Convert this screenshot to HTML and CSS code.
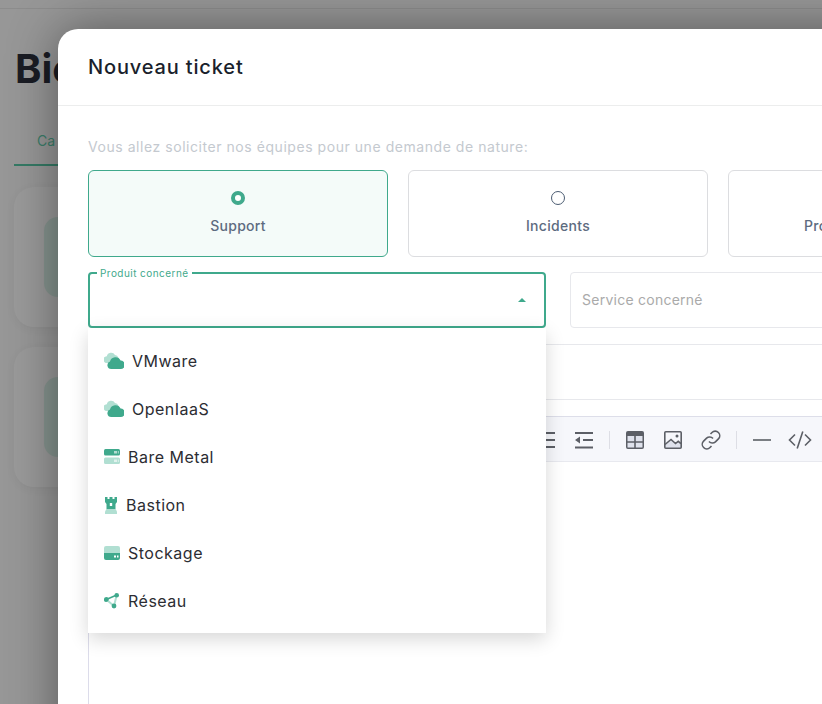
FILE: index.html
```html
<!DOCTYPE html>
<html lang="fr">
<head>
  <meta charset="UTF-8">
  <title>Nouveau ticket</title>
  <link rel="stylesheet" href="styles.css">
</head>
<body>
<div class="page">
  <div class="topbar"></div>
  <h1 class="page-title">Bie</h1>
  <div class="tabs"><span class="tab">Ca</span></div>
  <div class="card"><div class="card-thumb"></div></div>
  <div class="card"><div class="card-thumb"></div></div>
</div>

<div class="modal">
  <div class="modal-head">Nouveau ticket</div>
  <div class="modal-body">
    <div class="intro">Vous allez soliciter nos équipes pour une demande de nature:</div>

    <div class="kinds">
      <div class="kind selected"><span class="radio"></span><span>Support</span></div>
      <div class="kind"><span class="radio"></span><span>Incidents</span></div>
      <div class="kind kind-clipped"><span class="radio"></span><span>Pro</span></div>
    </div>

    <div class="fields">
      <div class="field open">
        <span class="field-label">Produit concerné</span>
        <span class="caret"></span>
        <div class="menu">
          <div class="menu-item">
            <svg width="20" height="18" viewBox="0 0 20 18"><path class="light" d="M11 11H3.200a3.400 3.400 0 0 1-.4-6.800A4.400 4.400 0 0 1 11 3a3.600 3.600 0 0 1 2 6.500z"/><path class="dark" d="M16.800 17H7.200a3.800 3.800 0 0 1-1.200-7.400 5.600 5.600 0 0 1 10.600-1 4.200 4.200 0 0 1 .2 8.400z"/></svg>
            VMware
          </div>
          <div class="menu-item">
            <svg width="20" height="18" viewBox="0 0 20 18"><path class="light" d="M11 11H3.200a3.400 3.400 0 0 1-.4-6.800A4.400 4.400 0 0 1 11 3a3.600 3.600 0 0 1 2 6.500z"/><path class="dark" d="M16.800 17H7.200a3.800 3.800 0 0 1-1.200-7.400 5.600 5.600 0 0 1 10.600-1 4.200 4.200 0 0 1 .2 8.400z"/></svg>
            OpenIaaS
          </div>
          <div class="menu-item">
            <svg width="16" height="16" viewBox="0 0 16 16"><rect class="dark" y="0" width="16" height="6.500" rx="1.500"/><rect class="light" y="8.500" width="16" height="6.500" rx="1.500"/><path class="dots" d="M10 2h3v2.500h-3zM13.800 2h1v2.500h-1zM10 10.500h3V13h-3zM13.800 10.500h1V13h-1z"/></svg>
            Bare Metal
          </div>
          <div class="menu-item tight">
            <svg width="14" height="17" viewBox="0 0 14 17"><path class="dark" d="M1 0h2.500v2h2V0h3v2h2V0H13v5l-1.500 2v5h-9V7L1 5z"/><path class="white" d="M5.800 6h2.400v3H5.800z"/><path class="light" d="M2.500 12h9l1.500 2.500V17H1v-2.500z"/></svg>
            Bastion
          </div>
          <div class="menu-item">
            <svg width="16" height="16" viewBox="0 0 16 16"><path class="light" d="M2 1h12a2 2 0 0 1 2 2v6H0V3a2 2 0 0 1 2-2z"/><path class="dark" d="M0 8h16v5a2 2 0 0 1-2 2H2a2 2 0 0 1-2-2z"/><path class="white" d="M10 10.500h2V12.500h-2zM13 10.500h1.500V12.500H13z"/></svg>
            Stockage
          </div>
          <div class="menu-item">
            <svg width="16" height="16" viewBox="0 0 16 16"><path class="light-line" d="M2.300 6.500 10 13M12.700 2 10 13"/><path class="dark-line" d="M2.300 6.500 12.700 2"/><circle class="dark" cx="2.300" cy="6.500" r="2.400"/><circle class="dark" cx="12.700" cy="2.300" r="2.300"/><circle class="dark" cx="10" cy="13" r="2.400"/></svg>
            Réseau
          </div>
        </div>
      </div>
      <div class="field placeholder">Service concerné</div>
    </div>

    <div class="field title-field"></div>

    <div class="editor">
      <div class="toolbar">
        <span class="tool"><svg viewBox="0 0 24 24"><path d="M3 4h18v2H3zM11 11h10v2H11zM11 18h10v2H11z"/></svg></span>
        <span class="tool"><svg viewBox="0 0 24 24"><path d="M3 4h18v2H3zM11 11h10v2H11zM3 18.500h18v2H3zM3 12l5-3.500v7z"/></svg></span>
        <span class="sep"></span>
        <span class="tool"><svg viewBox="0 0 24 24"><rect x="3" y="3" width="18" height="18" rx="2" fill="#dfe2ec"/><path d="M5 3h14a2 2 0 0 1 2 2v3H3V5a2 2 0 0 1 2-2zM3 8h1.500v11a.5.5 0 0 0 .5.5h14a.5.5 0 0 0 .5-.5V8H21v11a2 2 0 0 1-2 2H5a2 2 0 0 1-2-2zM11.200 8h1.600v12h-1.600zM4 13.200h16v1.600H4z"/></svg></span>
        <span class="tool"><svg viewBox="0 0 24 24"><path fill="#dfe2ec" d="M4 16.500l6-5 4.500 4 2.700-2.200 2.800 2.400V20H4z"/><path class="tool-line" d="M4 16.500l6-5 4.500 4 2.700-2.200 2.800 2.400"/><rect class="tool-line" x="3.800" y="3.800" width="16.400" height="16.400" rx="1"/><circle cx="16" cy="8" r="1.500"/></svg></span>
        <span class="tool"><svg viewBox="0 0 24 24"><path class="tool-line" d="M10 13.500a4.500 4.500 0 0 0 6.400.4l3-3a4.500 4.500 0 0 0-6.400-6.400l-1.500 1.500"/><path class="tool-line" d="M14 10.500a4.500 4.500 0 0 0-6.400-.4l-3 3a4.500 4.500 0 0 0 6.400 6.400l1.500-1.500"/></svg></span>
        <span class="sep"></span>
        <span class="tool"><svg viewBox="0 0 24 24"><path d="M3 11.200h18v1.600H3z"/></svg></span>
        <span class="tool"><svg viewBox="0 0 24 24"><path class="tool-line" d="M17 6.500 22.500 12 17 17.500M7 6.500 1.500 12 7 17.500M9.200 20.500l5.600-17"/></svg></span>
      </div>
      <div class="editor-area"></div>
    </div>
  </div>
</div>
</body>
</html>
```

FILE: styles.css
```css
* {
  box-sizing: border-box;
}

html, body {
  margin: 0;
  height: 100%;
  overflow: hidden;
}

body {
  font-family: "Inter", "Liberation Sans", sans-serif;
  background-color: #979797;
}

/* page dimmed behind the modal */
.page {
  height: 704px;
  padding-left: 14px;
}

.topbar {
  height: 9px;
  margin-left: -14px;
  border-bottom: 1px solid #8c8c8c;
}

.page-title {
  margin: 36px 0 0 1px;
  font-size: 40px;
  line-height: 48px;
  font-weight: 700;
  color: #1a1c24;
}

.tabs {
  margin-top: 37px;
  height: 36px;
  border-bottom: 2px solid #357a65;
}

.tab {
  display: block;
  padding: 0 0 0 23px;
  font-size: 14px;
  line-height: 22px;
  color: #3b7d69;
}

.card {
  height: 140px;
  margin-top: 21px;
  padding: 30px;
  border-radius: 20px;
  background-color: #9a9a9a;
  box-shadow: 0 2px 10px rgba(0, 0, 0, .05);
}

.card + .card {
  margin-top: 20px;
}

.card-thumb {
  width: 80px;
  height: 80px;
  border-radius: 14px;
  background-color: #86948f;
}

/* modal */
.modal {
  position: absolute;
  left: 58px;
  top: 29px;
  width: 1000px;
  height: 800px;
  background-color: #ffffff;
  border-radius: 20px 20px 0 0;
  box-shadow: 0 0 50px rgba(0, 0, 0, .42);
}

.modal-head {
  height: 77px;
  padding: 0 30px;
  border-bottom: 1px solid #eceded;
  font-size: 20px;
  line-height: 76px;
  font-weight: 500;
  letter-spacing: .85px;
  color: #1a1f2c;
}

.modal-body {
  padding: 29px 30px 0;
}

.intro {
  height: 24px;
  margin-bottom: 11px;
  font-size: 14px;
  line-height: 24px;
  letter-spacing: .55px;
  color: #c4c9cf;
}

.kinds {
  display: grid;
  grid-template-columns: repeat(3, 300px);
  gap: 20px;
}

.kind {
  height: 87px;
  display: flex;
  flex-direction: column;
  align-items: center;
  padding-top: 20px;
  gap: 11px;
  border: 1px solid #dcdde0;
  border-radius: 6px;
  font-size: 14px;
  line-height: 20px;
  font-weight: 500;
  letter-spacing: .3px;
  color: #5d6b80;
}

/* label runs past the window, only its start shows */
.kind-clipped span:last-child {
  width: 148px;
}

.kind.selected {
  background-color: #f4fbf9;
  border-color: #3fa98c;
}

.radio {
  width: 14px;
  height: 14px;
  border: 1px solid #4c5c72;
  border-radius: 50%;
}

.selected .radio {
  border: 4px solid #3fa98c;
  background-color: #ffffff;
}

.fields {
  display: grid;
  grid-template-columns: 458px 458px;
  gap: 24px;
  margin-top: 15px;
}

.field {
  position: relative;
  height: 56px;
  border: 1px solid #e7e8ec;
  border-radius: 4px;
}

.field.open {
  border: 2px solid #3fa98c;
}

.field.placeholder {
  padding-left: 11px;
  font-size: 14px;
  line-height: 54px;
  letter-spacing: .25px;
  color: #aaaaaa;
}

.field-label {
  position: absolute;
  left: 7px;
  top: -7px;
  padding: 0 3px;
  font-size: 10px;
  line-height: 13px;
  letter-spacing: .45px;
  color: #3fa98c;
  background-color: #ffffff;
}

.caret {
  position: absolute;
  right: 18px;
  top: 24px;
  width: 0;
  height: 0;
  border-left: 4px solid transparent;
  border-right: 4px solid transparent;
  border-bottom: 4px solid #3fa98c;
}

.title-field {
  margin-top: 16px;
}

/* open dropdown of the product field */
.menu {
  position: absolute;
  left: -2px;
  right: -2px;
  top: 54px;
  height: 305px;
  padding-top: 9px;
  background-color: #ffffff;
  box-shadow: 0 6px 18px rgba(0, 0, 0, .16);
  z-index: 2;
}

.menu-item {
  display: flex;
  align-items: center;
  gap: 8px;
  height: 48px;
  padding-left: 16px;
  font-size: 16px;
  letter-spacing: .5px;
  color: #2c2d33;
}

.menu-item svg {
  flex: none;
}

.light {
  fill: #b1dfd2;
}

.dark {
  fill: #3fa98c;
}

.white {
  fill: #ffffff;
}

.dots {
  fill: #ffffff;
  opacity: .6;
}

.light-line {
  fill: none;
  stroke: #b1dfd2;
  stroke-width: 2;
}

.dark-line {
  fill: none;
  stroke: #3fa98c;
  stroke-width: 1.5;
}

.editor {
  margin-top: 16px;
  border-left: 1px solid #dcdcea;
}

.toolbar {
  display: flex;
  align-items: center;
  gap: 12px;
  height: 46px;
  padding-left: 444px;
  padding-top: 2px;
  background-color: #f6f7fb;
  border-top: 1px solid #dddee9;
  border-bottom: 1px solid #e8e9ef;
}

.tool {
  flex: none;
  width: 26px;
  height: 24px;
  display: flex;
  justify-content: center;
}

.tool svg {
  width: 24px;
  height: 24px;
  fill: #5c5f66;
}

.tool .tool-line {
  fill: none;
  stroke: #5c5f66;
  stroke-width: 1.6;
}

.sep {
  flex: none;
  width: 1px;
  height: 18px;
  background-color: #dddee5;
}

.editor-area {
  height: 260px;
}
```
